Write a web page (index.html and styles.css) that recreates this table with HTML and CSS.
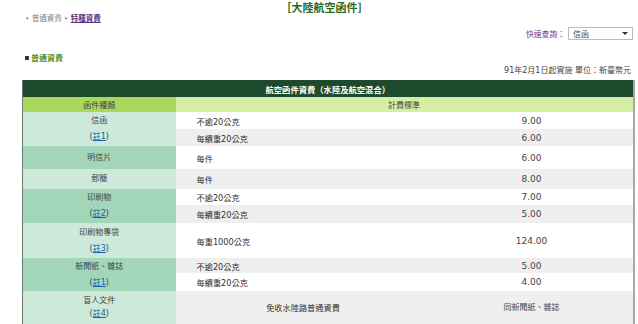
FILE: index.html
```html
<!DOCTYPE html>
<html lang="zh-Hant">
<head>
<meta charset="utf-8">
<title>大陸航空函件</title>
<link rel="stylesheet" href="styles.css">
</head>
<body>
<div class="page">
  <h1 class="title">［大陸航空函件］</h1>
  <div class="nav">
    <span class="nav-item">• 普通資費</span>
    <span class="nav-item"><span class="dot">•</span> <a class="nav-link" href="#">特種資費</a></span>
  </div>
  <div class="quick">
    <span class="quick-label">快速查詢：</span>
    <div class="select"><span>信函</span><span class="arrow"></span></div>
  </div>
  <h2 class="section"><span class="square"></span>普通資費</h2>
  <div class="note">91年2月1日起實施 單位：新臺幣元</div>
  <table class="rates">
    <colgroup><col class="c1"><col class="c2"><col class="c3"></colgroup>
    <tr class="h1"><th colspan="3">航空函件資費（水陸及航空混合）</th></tr>
    <tr class="h2"><th class="kind">函件種類</th><th colspan="2">計費標準</th></tr>
    <tr class="r17"><td class="cat light" rowspan="2">信函<br>(<a href="#">註1</a>)</td><td class="w">不逾20公克</td><td class="p">9.00</td></tr>
    <tr class="r17 g"><td class="w">每續重20公克</td><td class="p">6.00</td></tr>
    <tr class="r23"><td class="cat mid">明信片</td><td class="w">每件</td><td class="p">6.00</td></tr>
    <tr class="r20 g"><td class="cat light">郵簡</td><td class="w">每件</td><td class="p">8.00</td></tr>
    <tr class="r16"><td class="cat mid" rowspan="2">印刷物<br>(<a href="#">註2</a>)</td><td class="w">不逾20公克</td><td class="p">7.00</td></tr>
    <tr class="r18 g"><td class="w">每續重20公克</td><td class="p">5.00</td></tr>
    <tr class="r35"><td class="cat light">印刷物專袋<br>(<a href="#">註3</a>)</td><td class="w">每重1000公克</td><td class="p">124.00</td></tr>
    <tr class="r15 g"><td class="cat mid" rowspan="2">新聞紙、雜誌<br>(<a href="#">註1</a>)</td><td class="w">不逾20公克</td><td class="p">5.00</td></tr>
    <tr class="r18"><td class="w">每續重20公克</td><td class="p">4.00</td></tr>
    <tr class="r50 g"><td class="cat light top">盲人文件<br>(<a href="#">註4</a>)</td><td class="w center">免收水陸路普通資費</td><td class="p top2">同新聞紙、雜誌</td></tr>
  </table>
</div>
</body>
</html>
```
FILE: styles.css
```css
html, body {
  margin: 0;
  padding: 0;
  background: #fff;
}
body {
  font-family: "DejaVu Sans", "Noto Sans CJK TC", sans-serif;
  font-size: 8.5px;
  color: #333;
}
.page {
  padding: 0 5px 0 22px;
}
.title {
  margin: 0;
  padding: 1px 6px 0 0;
  height: 12px;
  font-size: 11px;
  line-height: 12px;
  font-weight: bold;
  color: #2d6a1c;
  text-align: center;
  font-family: "Noto Sans CJK TC", sans-serif;
}
.nav {
  height: 11px;
  line-height: 11px;
  padding-left: 3px;
  font-size: 7.5px;
  color: #888;
  display: flex;
  gap: 2px;
}
.nav-link {
  color: #5a2d86;
  font-weight: bold;
  text-decoration: underline;
}
.quick {
  margin-top: 2px;
  display: flex;
  justify-content: flex-end;
  align-items: center;
  gap: 3px;
  height: 14px;
}
.quick-label {
  color: #6a3a9e;
  font-size: 7.8px;
}
.select {
  width: 65px;
  height: 13px;
  box-sizing: border-box;
  border: 1px solid #bbb;
  display: flex;
  justify-content: space-between;
  align-items: center;
  padding: 0 4px 0 4px;
  font-size: 8px;
  color: #444;
}
.arrow {
  width: 0;
  height: 0;
  border-left: 3px solid transparent;
  border-right: 3px solid transparent;
  border-top: 3px solid #333;
}
.section {
  margin: 13px 0 0 3px;
  font-size: 8px;
  line-height: 12px;
  height: 12px;
  color: #5a8f1e;
  font-weight: bold;
  display: flex;
  align-items: center;
  gap: 2px;
}
.square {
  width: 4px;
  height: 4px;
  background: #2b3f2b;
  margin-top: -3px;
}
.note {
  text-align: right;
  font-size: 8px;
  line-height: 12px;
  height: 12px;
  margin-top: 0;
  padding-right: 2px;
  color: #444;
}
.rates {
  margin-top: 3px;
  width: 611px;
  border-collapse: collapse;
  table-layout: fixed;
  border-left: 1px solid #6b7d70;
  border-right: 2px solid #a8a8a8;
}
.c1 { width: 153px; }
.c2 { width: 255px; }
.c3 { width: 203px; }
.rates th, .rates td {
  padding: 0;
  font-weight: normal;
}
.rates .h1 th {
  background: #1d4a2d;
  color: #fff;
  height: 17px;
  font-weight: bold;
  font-size: 8.3px;
  text-align: center;
}
.rates .h2 th {
  background: #d4eea3;
  height: 15px;
  font-size: 8px;
  color: #444;
  text-align: center;
}
.rates .h2 th.kind {
  background: #a9d85c;
}
.rates td.cat {
  text-align: center;
  font-size: 8px;
  line-height: 16px;
  color: #444;
}
.cat a {
  color: #1b5ea8;
  text-decoration: underline;
}
.rates td.cat.top {
  vertical-align: top;
  padding-top: 3px;
  line-height: 13px;
}
.light { background: #cde9da; }
.mid { background: #a3d6b8; }
.rates td.w {
  padding-left: 21px;
  font-size: 8.2px;
  color: #333;
}
.rates td.w.center {
  text-align: center;
  padding: 10px 0 0;
  vertical-align: top;
}
.rates td.p {
  text-align: center;
  font-size: 9px;
  color: #444;
}
.rates td.p.top2 {
  font-size: 8px;
  vertical-align: top;
  padding-top: 10px;
}
.r15 { height: 15px; }
.r16 { height: 16px; }
.r17 { height: 17px; }
.r18 { height: 18px; }
.r20 { height: 20px; }
.r23 { height: 23px; }
.r35 { height: 35px; }
.r50 { height: 50px; }
tr .w, tr .p { background: #fff; }
tr.g .w, tr.g .p { background: #efefef; }
```
